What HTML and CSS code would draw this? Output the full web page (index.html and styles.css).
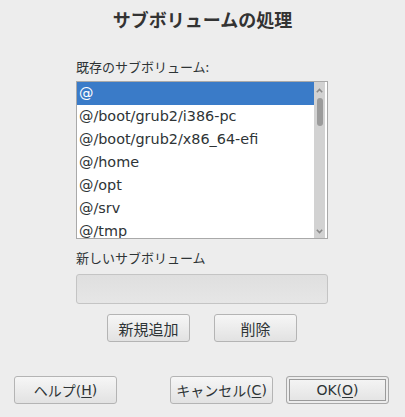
FILE: index.html
```html
<!DOCTYPE html>
<html lang="ja">
<head>
<meta charset="utf-8">
<link rel="stylesheet" href="styles.css">
</head>
<body>
<div class="dialog">
  <h1 class="title">サブボリュームの処理</h1>
  <div class="main">
    <div class="label first">既存のサブボリューム:</div>
    <div class="listbox">
      <div class="rows">
        <div class="row selected">@</div>
        <div class="row">@/boot/grub2/i386-pc</div>
        <div class="row">@/boot/grub2/x86_64-efi</div>
        <div class="row">@/home</div>
        <div class="row">@/opt</div>
        <div class="row">@/srv</div>
        <div class="row">@/tmp</div>
      </div>
      <div class="scrollbar">
        <div class="arrow up"><svg width="7" height="5" viewBox="0 0 7 5"><polyline points="0.8,4.2 3.5,1.5 6.2,4.2" fill="none" stroke="#8a8a8a" stroke-width="1.6"/></svg></div>
        <div class="thumb"></div>
        <div class="track"></div>
        <div class="arrow down"><svg width="7" height="5" viewBox="0 0 7 5"><polyline points="0.8,0.8 3.5,3.5 6.2,0.8" fill="none" stroke="#8a8a8a" stroke-width="1.6"/></svg></div>
      </div>
    </div>
    <div class="label second">新しいサブボリューム</div>
    <div class="entry"></div>
    <div class="actions">
      <button class="btn small">新規追加</button>
      <button class="btn small">削除</button>
    </div>
  </div>
  <div class="footer">
    <button class="btn wide">ヘルプ(<u>H</u>)</button>
    <div class="right">
      <button class="btn wide">キャンセル(<u>C</u>)</button>
      <button class="btn wide default">OK(<u>O</u>)</button>
    </div>
  </div>
</div>
</body>
</html>
```
FILE: styles.css
```css
html, body {
  margin: 0;
  padding: 0;
  background: #ededed;
}
body {
  width: 405px;
  height: 417px;
  overflow: hidden;
  font-family: "DejaVu Sans", "Noto Sans CJK JP", sans-serif;
  color: #2e3436;
}
.dialog {
  display: flex;
  flex-direction: column;
}
.title {
  margin: 0;
  padding-top: 6px;
  height: 26px;
  line-height: 26px;
  font-family: "Noto Sans CJK JP", sans-serif;
  font-size: 18px;
  font-weight: bold;
  text-align: center;
  color: #333;
}
.main {
  display: flex;
  flex-direction: column;
  padding: 0 77px 0 76px;
}
.label {
  font-family: "Noto Sans CJK JP", sans-serif;
  font-size: 13px;
  line-height: 18px;
  height: 18px;
}
.label.first { margin-top: 26px; }
.label.second { margin-top: 10px; }
.listbox {
  margin-top: 5px;
  height: 156px;
  border: 1px solid #a9a9a9;
  background: #fff;
  display: flex;
  overflow: hidden;
}
.rows {
  flex: 1;
  overflow: hidden;
}
.row {
  height: 23px;
  line-height: 23px;
  padding-left: 2px;
  font-size: 14.4px;
  white-space: nowrap;
}
.row.selected {
  background: #3a7bc8;
  color: #fff;
}
.scrollbar {
  width: 11px;
  margin-right: 2px;
  background: #d2d2d2;
  display: flex;
  flex-direction: column;
  align-items: center;
}
.arrow {
  height: 16px;
  display: flex;
  justify-content: center;
  align-items: center;
}
.arrow.down { height: 14px; }
.thumb {
  width: 6px;
  height: 28px;
  border-radius: 3px;
  background: #9b9b9b;
}
.track { flex: 1; }
.entry {
  margin-top: 7px;
  height: 28px;
  border: 1px solid #c4c4c4;
  border-radius: 3px;
  background: linear-gradient(#dfdfdf, #e6e6e6);
}
.actions {
  margin-top: 10px;
  display: flex;
  justify-content: center;
  gap: 24px;
}
.btn {
  box-sizing: border-box;
  height: 28px;
  border: 1px solid #b4b4b4;
  border-radius: 3px;
  background: linear-gradient(#f6f6f6, #e2e2e2);
  font-family: "DejaVu Sans", "Noto Sans CJK JP", sans-serif;
  font-size: 14px;
  color: #2e3436;
  padding: 0;
  display: flex;
  align-items: center;
  justify-content: center;
}
.btn.small { font-size: 15px; }
.btn u { text-underline-offset: 2px; }
.btn.small { width: 83px; }
.btn.wide { width: 103px; }
.btn.default {
  border-color: #a8a8a8;
  box-shadow: inset 0 0 0 2px #ececec, inset 0 0 0 3px #9a9a9a;
}
.footer {
  margin-top: 34px;
  padding: 0 16px 0 14px;
  display: flex;
  justify-content: space-between;
}
.right {
  display: flex;
  gap: 13px;
}
```
